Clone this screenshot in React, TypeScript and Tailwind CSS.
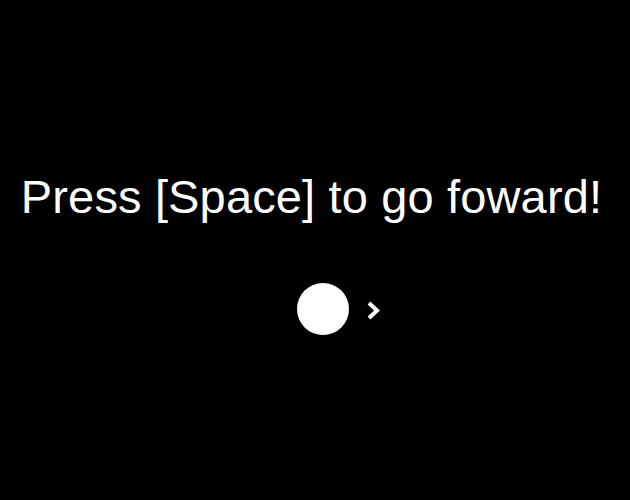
export default function App() {
  return (
    <div className="h-[500px] w-full bg-black pt-[173px] text-white" style={{ fontFamily: '"Liberation Sans", Arial, sans-serif' }}>
      <h1 className="pr-[7px] text-center text-[47px] font-normal leading-[47px] tracking-[0.15px]">Press [Space] to go foward!</h1>
      <div className="mt-[63px] flex items-center pl-[297px]">
        <div className="h-[52px] w-[52px] rounded-full bg-white" />
        <svg className="ml-[17px] mt-[2px]" width="16" height="21" viewBox="0 0 16 21" fill="none">
          <polyline points="3,3 11,10.5 3,18" stroke="white" strokeWidth="4" strokeLinecap="butt" strokeLinejoin="miter" />
        </svg>
      </div>
    </div>
  );
}
